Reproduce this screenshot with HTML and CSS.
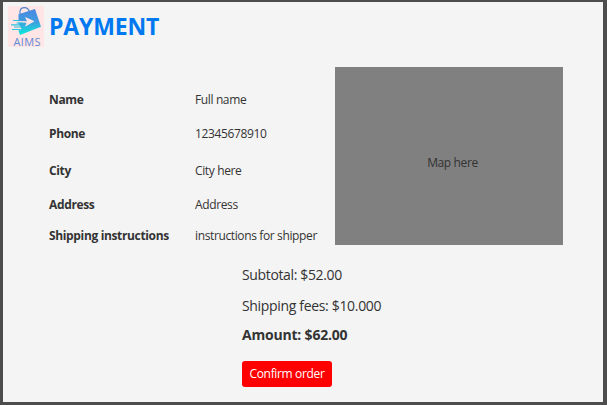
FILE: index.html
```html
<!DOCTYPE html>
<html lang="en">
<head>
<meta charset="utf-8">
<title>Payment</title>
<link rel="stylesheet" href="styles.css">
</head>
<body>
<main class="window">
  <header class="header">
    <svg class="logo" viewBox="0 0 36 41" role="img" aria-label="AIMS">
      <defs>
        <linearGradient id="bag" x1="0" y1="0" x2="0" y2="1">
          <stop offset="0" stop-color="#4a86e0"/>
          <stop offset=".5" stop-color="#3f9fe0"/>
          <stop offset="1" stop-color="#0aeadb"/>
        </linearGradient>
      </defs>
      <rect width="36" height="41" fill="#ffe5e5"/>
      <path d="M12 9V6.200C12 3.200 14 1.600 16.500 1.600s4.300 1.500 5 4.400" fill="none" stroke="#4f86cc" stroke-width="1.200"/>
      <path d="M10.500 8.200 27 2.900 33 20.800 12 29 10.500 25l3-2.500-3-5z" fill="url(#bag)"/>
      <path d="M17 11 26.500 15.200 17 20.700l1.500-4-8-.2v-1.500l8.500.2z" fill="#ffe5e5"/>
      <path d="M5 14.500h6M8.500 17h6M3 18.800h9M6 21h7M4 23.500h8" stroke="#2bc4df" stroke-width="1.200"/>
      <text class="logo-text" x="5.500" y="39.500" textLength="27">AIMS</text>
    </svg>
    <h1 class="title">PAYMENT</h1>
  </header>
  <section class="delivery">
    <dl class="details">
      <dt>Name</dt><dd>Full name</dd>
      <dt>Phone</dt><dd class="number">12345678910</dd>
      <dt>City</dt><dd>City here</dd>
      <dt>Address</dt><dd>Address</dd>
      <dt>Shipping instructions</dt><dd>instructions for shipper</dd>
    </dl>
    <div class="map">Map here</div>
  </section>
  <section class="summary">
    <p class="subtotal">Subtotal: $52.00</p>
    <p class="fees">Shipping fees: $10.000</p>
    <p class="amount">Amount: $62.00</p>
    <button class="confirm" type="button">Confirm order</button>
  </section>
</main>
</body>
</html>
```

FILE: styles.css
```css
* { box-sizing: border-box; }
html, body { height: 100%; }
body {
  margin: 0;
  padding: 2px 4px 3px 3px;
  background: #4d4d4d;
  color: #333;
  font: 12px/16px "Open Sans", "Noto Sans", sans-serif;
  overflow: hidden;
}
.window {
  height: 400px;
  background: #f4f4f4;
}
.header {
  display: flex;
  height: 65px;
  padding: 4px 0 0 5px;
}
.logo { width: 36px; height: 41px; overflow: visible; }
.logo-text {
  font: 11px "Open Sans", sans-serif;
  fill: #5f8ad4;
}
.title {
  margin: 4px 0 0 5px;
  color: #0078f0;
  font-size: 23px;
  line-height: 32px;
  letter-spacing: -.15px;
}
.delivery {
  display: flex;
  height: 186px;
  padding-left: 46px;
}
.details {
  display: grid;
  grid-template-columns: 146px 140px;
  grid-template-rows: 34px 34px 40px 28px 34px;
  align-items: center;
  margin: 16px 0 0;
  white-space: nowrap;
}
dt { font-weight: 700; letter-spacing: -.35px; }
dd { margin: 0; letter-spacing: -.37px; }
.number { letter-spacing: -.35px; }
.map {
  display: flex;
  align-items: center;
  justify-content: center;
  width: 228px;
  height: 178px;
  padding: 13px 0 0 7px;
  background: #808080;
  letter-spacing: -.37px;
}
.summary {
  padding: 12px 0 0 239px;
  font-size: 14px;
  line-height: 20px;
}
.summary p { margin: 0; letter-spacing: -.36px; }
.summary .fees { margin-top: 11px; letter-spacing: -.33px; }
.summary .amount { margin-top: 9px; font-weight: 700; letter-spacing: -.2px; }
.confirm {
  display: block;
  width: 90px;
  height: 26px;
  margin-top: 16px;
  padding: 0;
  border: 0;
  border-radius: 3px;
  background: #f00;
  color: #fff;
  font: 12px/24px "Open Sans", "Noto Sans", sans-serif;
  letter-spacing: -.35px;
}
```
